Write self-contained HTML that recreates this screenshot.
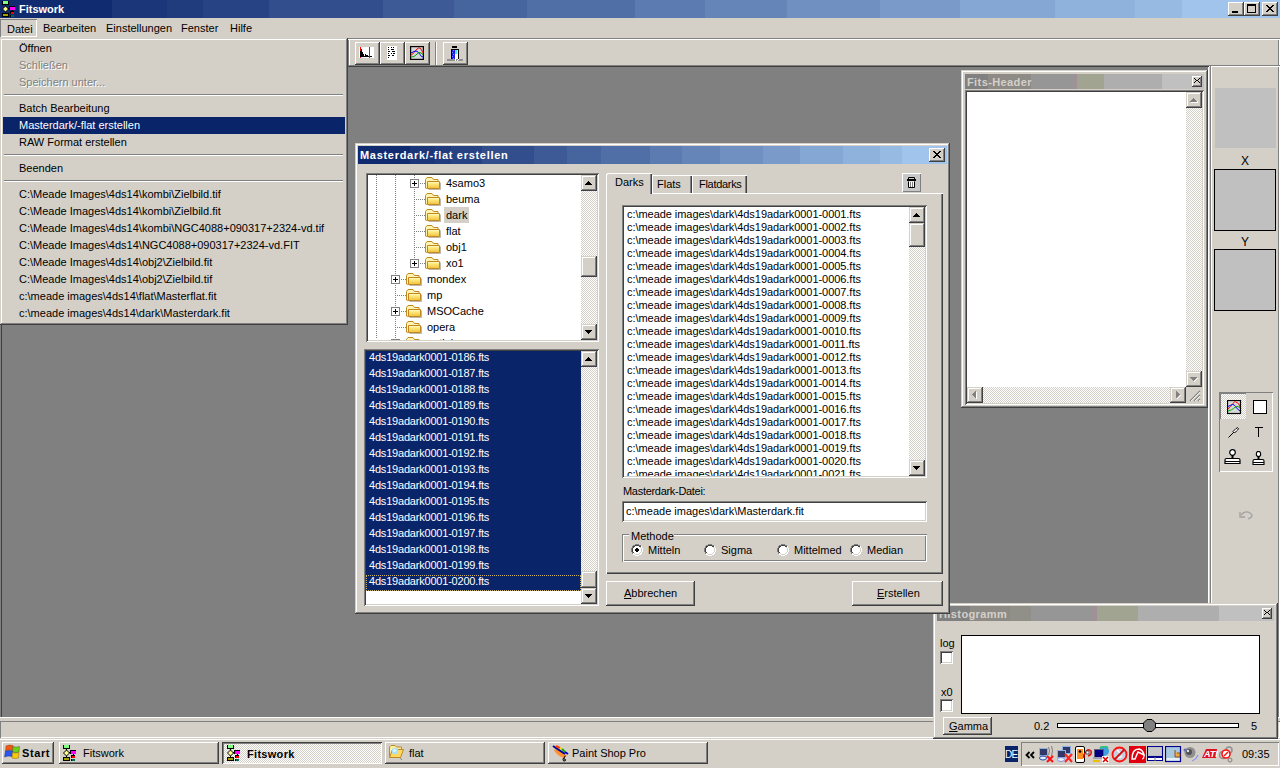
<!DOCTYPE html>
<html><head><meta charset="utf-8">
<style>
*{margin:0;padding:0;box-sizing:border-box}
html,body{width:1280px;height:768px;overflow:hidden;background:#d4d0c8;font-family:"Liberation Sans",sans-serif;font-size:11px;color:#000}
.a{position:absolute}
.t{position:absolute;white-space:nowrap;line-height:13px;font-size:11px}
.b{font-weight:bold}
</style></head><body>

<div class="a" style="left:0px;top:0px;width:1280px;height:18px;background:linear-gradient(90deg,#112b70 0px 112px,#1b3679 112px 167px,#213c7d 167px 203px,#274383 203px 269px,#324e8c 269px 383px,#3d5a96 383px 454px,#46649d 454px 527px,#516fa7 527px 635px,#5c7bb0 635px 705px,#6585b8 705px 787px,#7090c1 787px 880px,#7a9bca 880px 960px,#85a7d3 960px 1055px,#8fb2dd 1055px 1135px,#97bae3 1135px 1182px,#a0c4eb 1182px 1280px)"></div>
<div class="t" style="left:19px;top:3px;color:#fff;font-weight:bold">Fitswork</div>
<svg class="a" style="left:0px;top:0px" width="16" height="18" shape-rendering="crispEdges">
<rect x="2" y="1" width="7" height="4" fill="#000"/><rect x="3" y="1" width="5" height="3" fill="#80ff80"/>
<rect x="5" y="5" width="1" height="2" fill="#000"/>
<path d="M5.5 6L8.5 9L5.5 12L2.5 9z" fill="#ffff90" stroke="#000" stroke-width="1" shape-rendering="auto"/>
<rect x="5" y="12" width="1" height="1" fill="#000"/>
<rect x="2" y="13" width="7" height="4" fill="#000"/><rect x="3" y="14" width="5" height="2" fill="#a0a000"/>
<rect x="9" y="6" width="6" height="4" fill="#000"/><rect x="10" y="7" width="5" height="3" fill="#ff00ff"/>
<rect x="8" y="8" width="1" height="1" fill="#000"/>
<rect x="12" y="10" width="1" height="1" fill="#000"/>
<rect x="10" y="11" width="4" height="3" fill="#000"/><rect x="11" y="12" width="3" height="2" fill="#ff0000"/>
<rect x="10" y="15" width="4" height="2" fill="#000"/><rect x="11" y="15" width="3" height="2" fill="#006858"/>
</svg>
<div class="a" style="left:1228px;top:2px;width:16px;height:14px;background:#d4d0c8;box-shadow:inset -1px -1px #404040,inset 1px 1px #fff,inset -2px -2px #808080;"></div>
<div class="a" style="left:1244px;top:2px;width:16px;height:14px;background:#d4d0c8;box-shadow:inset -1px -1px #404040,inset 1px 1px #fff,inset -2px -2px #808080;"></div>
<div class="a" style="left:1262px;top:2px;width:16px;height:14px;background:#d4d0c8;box-shadow:inset -1px -1px #404040,inset 1px 1px #fff,inset -2px -2px #808080;"></div>
<svg class="a" style="left:1228px;top:2px" width="16" height="14"><rect x="4" y="9" width="6" height="2" fill="#000"/></svg>
<svg class="a" style="left:1244px;top:2px" width="16" height="14" shape-rendering="crispEdges"><path d="M3 2h9v2H3zM3 4h1v6H3zM11 4h1v6h-1zM3 10h9v1H3z" fill="#000"/></svg>
<svg class="a" style="left:1262px;top:2px" width="16" height="14" shape-rendering="crispEdges"><path d="M4 3h2v1h1v1h2V4h1V3h2v1h-1v1h-1v1H9v1h1v1h1v1h1v1h-2V9H9V8H7v1H6v1H4V9h1V8h1V7h1V6H6V5H5V4H4z" fill="#000"/></svg>
<div class="a" style="left:0px;top:18px;width:1280px;height:20px;background:#d4d0c8"></div>
<div class="a" style="left:0px;top:19px;width:37px;height:18px;background:#d4d0c8;box-shadow:inset 1px 1px #808080,inset -1px -1px #fff;"></div>
<div class="t" style="left:7px;top:23px;">Datei</div>
<div class="t" style="left:43px;top:22px;">Bearbeiten</div>
<div class="t" style="left:106px;top:22px;">Einstellungen</div>
<div class="t" style="left:181px;top:22px;">Fenster</div>
<div class="t" style="left:230px;top:22px;">Hilfe</div>
<div class="a" style="left:0px;top:38px;width:1280px;height:29px;background:#d4d0c8;box-shadow:inset 1px 1px #808080,inset -1px -1px #fff,inset 2px 2px #fff,inset -2px -2px #808080"></div>
<div class="a" style="left:0px;top:65px;width:1209px;height:653px;background:#808080;box-shadow:inset 1px 1px #808080,inset 2px 2px #404040,inset -1px -1px #fff,inset -2px -2px #808080"></div>
<div class="a" style="left:1210px;top:65px;width:70px;height:653px;background:#d4d0c8;box-shadow:inset 1px 1px #808080,inset -1px -1px #fff,inset 2px 2px #fff,inset -2px -2px #808080"></div>
<div class="a" style="left:0px;top:717px;width:1280px;height:22px;background:#d4d0c8;box-shadow:inset 0 1px #fff"></div>
<div class="a" style="left:0px;top:721px;width:1280px;height:17px;background:#d4d0c8;box-shadow:inset 1px 1px #808080,inset -1px -1px #fff;"></div>
<div class="a" style="left:0px;top:738px;width:1280px;height:30px;background:#d4d0c8;box-shadow:inset 0 1px #d4d0c8,inset 0 2px #fff"></div>
<div class="a" style="left:348px;top:40px;width:1px;height:26px;background:#808080"></div>
<div class="a" style="left:349px;top:40px;width:1px;height:25px;background:#fff"></div>
<div class="a" style="left:355px;top:42px;width:25px;height:23px;background:#d4d0c8;box-shadow:inset -1px -1px #404040,inset 1px 1px #fff,inset -2px -2px #808080;"></div>
<div class="a" style="left:380px;top:42px;width:25px;height:23px;background:#d4d0c8;box-shadow:inset -1px -1px #404040,inset 1px 1px #fff,inset -2px -2px #808080;"></div>
<div class="a" style="left:405px;top:42px;width:25px;height:23px;background:#d4d0c8;box-shadow:inset -1px -1px #404040,inset 1px 1px #fff,inset -2px -2px #808080;"></div>
<div class="a" style="left:443px;top:42px;width:25px;height:23px;background:#d4d0c8;box-shadow:inset -1px -1px #404040,inset 1px 1px #fff,inset -2px -2px #808080;"></div>
<div class="a" style="left:435px;top:42px;width:1px;height:23px;background:#808080"></div>
<div class="a" style="left:436px;top:42px;width:1px;height:23px;background:#fff"></div>
<svg class="a" style="left:359px;top:47px" width="15" height="11" shape-rendering="crispEdges">
<rect width="15" height="11" fill="#fff"/>
<rect x="1" y="0" width="1" height="11" fill="#f00"/><rect x="10" y="0" width="1" height="11" fill="#f00"/>
<path d="M1 4h1v6H1zM2 2h1v8H2zM3 5h1v5H3zM4 7h1v3H4zM5 9h1v1H5zM6 7h1v3H6zM7 8h2v2H7zM9 9h1v1H9zM11 9h2v1h-2z" fill="#000"/>
</svg>
<svg class="a" style="left:387px;top:46px" width="11" height="14">
<rect width="10" height="14" fill="#fff"/>
<g fill="#000"><rect x="1" y="1" width="1" height="1"/><rect x="4" y="1" width="1" height="1"/><rect x="6" y="1" width="1" height="1"/>
<rect x="1" y="3" width="1" height="1"/><rect x="4" y="3" width="3" height="1"/>
<rect x="1" y="5" width="2" height="1"/><rect x="5" y="5" width="3" height="1"/>
<rect x="1" y="7" width="1" height="1"/><rect x="4" y="7" width="1" height="1"/><rect x="6" y="7" width="2" height="1"/>
<rect x="1" y="9" width="2" height="1"/><rect x="5" y="9" width="2" height="1"/>
<rect x="1" y="11" width="1" height="1"/></g>
</svg>
<svg class="a" style="left:410px;top:46px" width="14" height="14">
<rect x="1" y="1" width="12" height="12" fill="#d8d8d8"/><rect x="0.6" y="0.6" width="12.8" height="12.8" fill="none" stroke="#000" stroke-width="1.2"/>
<path d="M1 9.5 L4 6.5 L7 3 L8.5 2 L10 2 L11.5 4 L13 7" stroke="#f00" fill="none"/>
<path d="M1 7 L4 5.5 L6 5 L8 6 L10 8.5 L11.5 10.5 L13 11" stroke="#00f" fill="none"/>
<path d="M1 11 L4 10.5 L6 9 L8 7 L9 6.5 L11 7 L13 8.5" stroke="#0a0" fill="none"/>
</svg>
<svg class="a" style="left:446px;top:45px" width="18" height="17" shape-rendering="crispEdges">
<rect x="6" y="1" width="5" height="2" fill="#000"/>
<rect x="5" y="4" width="8" height="11" fill="#000"/>
<rect x="6" y="5" width="3" height="9" fill="#2020e0"/>
<path d="M7 5h1v1H7zM6 7h1v1H6zM7 9h1v1H7zM6 11h1v1H6zM7 13h1v1H7z" fill="#8080ff"/>
<rect x="9" y="5" width="3" height="10" fill="#fff"/>
<rect x="9" y="5" width="2" height="4" fill="#40e8f0"/>
<rect x="1" y="14" width="16" height="2" fill="#909090"/>
<path d="M9 14h1v2H9zM11 15h1v1h-1zM12 14h1v1h-1z" fill="#fff"/>
</svg>
<div class="a" style="left:1215px;top:88px;width:61px;height:60px;background:#c0c0c0"></div>
<div class="t" style="left:1241px;top:155px;font-size:12px">X</div>
<div class="a" style="left:1214px;top:169px;width:62px;height:62px;background:#c0c0c0;border:1px solid #000"></div>
<div class="t" style="left:1241px;top:236px;font-size:12px">Y</div>
<div class="a" style="left:1214px;top:249px;width:62px;height:62px;background:#c0c0c0;border:1px solid #000"></div>
<div class="a" style="left:1219px;top:392px;width:54px;height:80px;box-shadow:inset 1px 1px #808080,inset -1px -1px #fff"></div>
<div class="a" style="left:1220px;top:393px;width:26px;height:26px;background:repeating-conic-gradient(#fff 0 25%,#d4d0c8 0 50%) 0 0/2px 2px;box-shadow:inset 1px 1px #808080"></div>
<svg class="a" style="left:1227px;top:400px" width="15" height="15">
<rect x="0.5" y="0.5" width="13" height="13" fill="#d8d8d8" stroke="#000" stroke-width="1.2"/>
<path d="M1 9 Q4 6 6 3.5 T8 1.5 T10 2.5 13 7" stroke="#f00" fill="none"/>
<path d="M1 6.5 Q4 5 5.5 4.5 T8.5 6.5 13 11" stroke="#00f" fill="none"/>
<path d="M1 11 Q5 10 6.5 8.5 T9.5 6.5 13 8" stroke="#0a0" fill="none"/>
</svg>
<div class="a" style="left:1253px;top:400px;width:14px;height:14px;background:#fff;border:1px solid #000"></div>
<svg class="a" style="left:1227px;top:426px" width="13" height="13">
<path d="M1.5 11.5L7 6" stroke="#000" stroke-width="1"/><path d="M6 5.5L9 2.5Q11 1 11.5 2.5Q11 4 9.5 5L7.5 7z" fill="#fff" stroke="#000" stroke-width="1"/>
</svg>
<svg class="a" style="left:1255px;top:427px" width="8" height="11" shape-rendering="crispEdges">
<rect x="0" y="0" width="8" height="1" fill="#000"/><rect x="3" y="0" width="1" height="10" fill="#000"/>
</svg>
<svg class="a" style="left:1224px;top:449px" width="17" height="17">
<circle cx="8.5" cy="3.5" r="2.8" fill="#fff" stroke="#000" stroke-width="1.2"/><rect x="7.5" y="6" width="2" height="3" fill="#000"/>
<path d="M2.5 9.5h12q1.5 0 1.5 1.5v3.5h-15V11q0-1.5 1.5-1.5z" fill="#fff" stroke="#000" stroke-width="1.2"/><path d="M1 12.5h15" stroke="#000"/>
</svg>
<svg class="a" style="left:1252px;top:451px" width="13" height="15">
<ellipse cx="6.5" cy="3" rx="2.2" ry="2.6" fill="#fff" stroke="#000" stroke-width="1.1"/><rect x="5.5" y="5.5" width="2" height="3" fill="#000"/>
<path d="M2.5 8.5h8q1.5 0 1.5 1.5v3.5H1V10q0-1.5 1.5-1.5z" fill="#fff" stroke="#000" stroke-width="1.1"/><path d="M1 11.5h11" stroke="#000"/>
</svg>
<svg class="a" style="left:1239px;top:509px" width="16" height="12">
<path d="M2 6 Q6 1 11 4 T9 10" stroke="#a0a0a0" fill="none" stroke-width="1.3"/><path d="M1 3v5h5" stroke="#a0a0a0" fill="none" stroke-width="1.3"/>
</svg>
<div class="a" style="left:0px;top:38px;width:348px;height:287px;background:#d4d0c8;box-shadow:inset -1px -1px #404040,inset 1px 1px #d4d0c8,inset -2px -2px #808080,inset 2px 2px #fff"></div>
<div class="t" style="left:19px;top:42px;">Öffnen</div>
<div class="t" style="left:20px;top:60px;color:#fff">Schließen</div>
<div class="t" style="left:19px;top:59px;color:#808080">Schließen</div>
<div class="t" style="left:20px;top:77px;color:#fff">Speichern unter...</div>
<div class="t" style="left:19px;top:76px;color:#808080">Speichern unter...</div>
<div class="a" style="left:4px;top:94px;width:339px;height:1px;background:#808080"></div>
<div class="a" style="left:4px;top:95px;width:339px;height:1px;background:#fff"></div>
<div class="t" style="left:19px;top:102px;">Batch Bearbeitung</div>
<div class="a" style="left:3px;top:117px;width:342px;height:17px;background:#0a246a"></div>
<div class="t" style="left:19px;top:119px;color:#fff">Masterdark/-flat erstellen</div>
<div class="t" style="left:19px;top:136px;">RAW Format erstellen</div>
<div class="a" style="left:4px;top:154px;width:339px;height:1px;background:#808080"></div>
<div class="a" style="left:4px;top:155px;width:339px;height:1px;background:#fff"></div>
<div class="t" style="left:19px;top:162px;">Beenden</div>
<div class="a" style="left:4px;top:180px;width:339px;height:1px;background:#808080"></div>
<div class="a" style="left:4px;top:181px;width:339px;height:1px;background:#fff"></div>
<div class="t" style="left:19px;top:188px;">C:\Meade Images\4ds14\kombi\Zielbild.tif</div>
<div class="t" style="left:19px;top:205px;">C:\Meade Images\4ds14\kombi\Zielbild.fit</div>
<div class="t" style="left:19px;top:222px;">C:\Meade Images\4ds14\kombi\NGC4088+090317+2324-vd.tif</div>
<div class="t" style="left:19px;top:239px;">C:\Meade Images\4ds14\NGC4088+090317+2324-vd.FIT</div>
<div class="t" style="left:19px;top:256px;">C:\Meade Images\4ds14\obj2\Zielbild.fit</div>
<div class="t" style="left:19px;top:273px;">C:\Meade Images\4ds14\obj2\Zielbild.tif</div>
<div class="t" style="left:19px;top:290px;">c:\meade images\4ds14\flat\Masterflat.fit</div>
<div class="t" style="left:19px;top:307px;">c:\meade images\4ds14\dark\Masterdark.fit</div>
<div class="a" style="left:961px;top:70px;width:247px;height:338px;background:#d4d0c8;box-shadow:inset -1px -1px #404040,inset 1px 1px #d4d0c8,inset -2px -2px #808080,inset 2px 2px #fff"></div>
<div class="a" style="left:965px;top:74px;width:239px;height:15px;background:linear-gradient(90deg,#808080 0px 23px,#8e8a86 23px 66px,#969696 66px 108px,#a09098 108px 112px,#a0a490 112px 139px,#aeaeae 139px 197px,#c0c0c0 197px 238px)"></div>
<div class="t" style="left:967px;top:76px;color:#d4d0c8;font-weight:bold;letter-spacing:0.4px">Fits-Header</div>
<div class="a" style="left:1192px;top:76px;width:10px;height:11px;background:#d4d0c8;box-shadow:inset -1px -1px #404040,inset 1px 1px #fff,inset -2px -2px #808080;"></div>
<svg class="a" style="left:1192px;top:76px" width="10" height="11" shape-rendering="crispEdges"><path d="M2 2h1v1H2zM7 2h1v1H7zM3 3h1v1H3zM6 3h1v1H6zM4 4h2v1H4zM3 5h1v1H3zM6 5h1v1H6zM2 6h1v1H2zM7 6h1v1H7z" fill="#000"/></svg>
<div class="a" style="left:965px;top:90px;width:239px;height:315px;background:#fff;box-shadow:inset 1px 1px #808080,inset -1px -1px #fff,inset 2px 2px #404040,inset -2px -2px #d4d0c8;"></div>
<div class="a" style="left:1186px;top:92px;width:16px;height:295px;background:repeating-conic-gradient(#fff 0 25%,#d4d0c8 0 50%) 0 0/2px 2px"></div>
<div class="a" style="left:1186px;top:92px;width:16px;height:16px;background:#d4d0c8;box-shadow:inset -1px -1px #404040,inset 1px 1px #d4d0c8,inset -2px -2px #808080,inset 2px 2px #fff;"></div>
<div class="a" style="left:1186px;top:371px;width:16px;height:16px;background:#d4d0c8;box-shadow:inset -1px -1px #404040,inset 1px 1px #d4d0c8,inset -2px -2px #808080,inset 2px 2px #fff;"></div>
<svg class="a" style="left:1190px;top:98px" width="8" height="6" shape-rendering="crispEdges"><path d="M3 0h1v1h1v1h1v1h1v1H0V3h1V2h1V1h1z" fill="#808080"/><path d="M1 4h7v1H1zM7 3h1v1H7z" fill="#fff"/></svg>
<svg class="a" style="left:1190px;top:377px" width="8" height="6" shape-rendering="crispEdges"><path d="M0 0h7v1h-1v1h-1v1h-1v1H3V3H2V2H1V1H0z" fill="#808080"/><path d="M4 4h1v1H4zM5 3h1v1H5zM6 2h1v1H6zM7 1h1v1H7z" fill="#fff"/></svg>
<div class="a" style="left:967px;top:387px;width:219px;height:16px;background:repeating-conic-gradient(#fff 0 25%,#d4d0c8 0 50%) 0 0/2px 2px"></div>
<div class="a" style="left:967px;top:387px;width:16px;height:16px;background:#d4d0c8;box-shadow:inset -1px -1px #404040,inset 1px 1px #d4d0c8,inset -2px -2px #808080,inset 2px 2px #fff;"></div>
<div class="a" style="left:1170px;top:387px;width:16px;height:16px;background:#d4d0c8;box-shadow:inset -1px -1px #404040,inset 1px 1px #d4d0c8,inset -2px -2px #808080,inset 2px 2px #fff;"></div>
<svg class="a" style="left:972px;top:391px" width="6" height="9" shape-rendering="crispEdges"><path d="M3 0h1v7H3zM2 1h1v5H2zM1 2h1v3H1zM0 3h1v1H0z" fill="#808080"/><path d="M4 1h1v7H4z" fill="#fff"/></svg>
<svg class="a" style="left:1176px;top:391px" width="6" height="9" shape-rendering="crispEdges"><path d="M0 0h1v7H0zM1 1h1v5H1zM2 2h1v3H2zM3 3h1v1H3z" fill="#808080"/><path d="M1 7h1v1H1zM2 6h1v1H2zM3 5h1v1H3zM4 4h1v1H4z" fill="#fff"/></svg>
<div class="a" style="left:1186px;top:387px;width:16px;height:16px;background:#d4d0c8"></div>
<svg class="a" style="left:1189px;top:390px" width="12" height="12"><path d="M11 1L1 11M11 5L5 11M11 9L9 11" stroke="#808080" stroke-width="1.2"/><path d="M11 2L2 11M11 6L6 11M11 10L10 11" stroke="#fff" stroke-width="0.8"/></svg>
<div class="a" style="left:933px;top:603px;width:345px;height:136px;background:#d4d0c8;box-shadow:inset -1px -1px #404040,inset 1px 1px #d4d0c8,inset -2px -2px #808080,inset 2px 2px #fff"></div>
<div class="a" style="left:937px;top:606px;width:337px;height:15px;background:linear-gradient(90deg,#808080 0px 33px,#8e8a86 33px 73px,#909088 73px 94px,#969696 94px 154px,#a09098 154px 160px,#a0a490 160px 201px,#aeaeae 201px 282px,#c0c0c0 282px 337px)"></div>
<div class="t" style="left:939px;top:608px;color:#d4d0c8;font-weight:bold;letter-spacing:0.4px">Histogramm</div>
<div class="a" style="left:1262px;top:608px;width:10px;height:11px;background:#d4d0c8;box-shadow:inset -1px -1px #404040,inset 1px 1px #fff,inset -2px -2px #808080;"></div>
<svg class="a" style="left:1262px;top:608px" width="10" height="11" shape-rendering="crispEdges"><path d="M2 2h1v1H2zM7 2h1v1H7zM3 3h1v1H3zM6 3h1v1H6zM4 4h2v1H4zM3 5h1v1H3zM6 5h1v1H6zM2 6h1v1H2zM7 6h1v1H7z" fill="#000"/></svg>
<div class="a" style="left:961px;top:635px;width:299px;height:79px;background:#fff;border:1px solid #000"></div>
<div class="t" style="left:940px;top:637px;">log</div>
<div class="a" style="left:940px;top:651px;width:13px;height:13px;background:#fff;box-shadow:inset 1px 1px #808080,inset -1px -1px #fff,inset 2px 2px #404040,inset -2px -2px #d4d0c8;"></div>
<div class="t" style="left:941px;top:686px;">x0</div>
<div class="a" style="left:940px;top:699px;width:13px;height:13px;background:#fff;box-shadow:inset 1px 1px #808080,inset -1px -1px #fff,inset 2px 2px #404040,inset -2px -2px #d4d0c8;"></div>
<div class="a" style="left:943px;top:717px;width:49px;height:18px;background:#d4d0c8;box-shadow:inset -1px -1px #404040,inset 1px 1px #fff,inset -2px -2px #808080;"></div>
<div class="t" style="left:949px;top:720px;"><u>G</u>amma</div>
<div class="t" style="left:1034px;top:720px;">0.2</div>
<div class="t" style="left:1251px;top:720px;">5</div>
<div class="a" style="left:1057px;top:723px;width:182px;height:5px;background:#fff;border:1px solid #000"></div>
<svg class="a" style="left:1143px;top:719px" width="13" height="13"><path d="M4 .5h5L12.5 4v5L9 12.5H4L.5 9V4z" fill="#808080" stroke="#000"/></svg>
<div class="a" style="left:355px;top:143px;width:595px;height:471px;background:#d4d0c8;box-shadow:inset -1px -1px #404040,inset 1px 1px #d4d0c8,inset -2px -2px #808080,inset 2px 2px #fff"></div>
<div class="a" style="left:358px;top:146px;width:589px;height:18px;background:linear-gradient(90deg,#112b70 0px 52px,#1b3679 52px 77px,#213c7d 77px 93px,#274383 93px 124px,#324e8c 124px 176px,#3d5a96 176px 209px,#46649d 209px 243px,#516fa7 243px 292px,#5c7bb0 292px 324px,#6585b8 324px 362px,#7090c1 362px 405px,#7a9bca 405px 442px,#85a7d3 442px 485px,#8fb2dd 485px 522px,#97bae3 522px 544px,#a0c4eb 544px 589px)"></div>
<div class="t" style="left:360px;top:149px;color:#fff;font-weight:bold;letter-spacing:0.7px">Masterdark/-flat erstellen</div>
<div class="a" style="left:929px;top:148px;width:16px;height:14px;background:#d4d0c8;box-shadow:inset -1px -1px #404040,inset 1px 1px #fff,inset -2px -2px #808080;"></div>
<svg class="a" style="left:929px;top:148px" width="16" height="14" shape-rendering="crispEdges"><path d="M4 3h2v1h1v1h2V4h1V3h2v1h-1v1h-1v1H9v1h1v1h1v1h1v1h-2V9H9V8H7v1H6v1H4V9h1V8h1V7h1V6H6V5H5V4H4z" fill="#000"/></svg>
<div class="a" style="left:366px;top:173px;width:233px;height:169px;background:#fff;box-shadow:inset 1px 1px #808080,inset -1px -1px #fff,inset 2px 2px #404040,inset -2px -2px #d4d0c8;"></div>
<div class="a" style="left:581px;top:175px;width:16px;height:165px;background:repeating-conic-gradient(#fff 0 25%,#d4d0c8 0 50%) 0 0/2px 2px"></div>
<div class="a" style="left:581px;top:175px;width:16px;height:16px;background:#d4d0c8;box-shadow:inset -1px -1px #404040,inset 1px 1px #d4d0c8,inset -2px -2px #808080,inset 2px 2px #fff;"></div>
<div class="a" style="left:581px;top:324px;width:16px;height:16px;background:#d4d0c8;box-shadow:inset -1px -1px #404040,inset 1px 1px #d4d0c8,inset -2px -2px #808080,inset 2px 2px #fff;"></div>
<svg class="a" style="left:585px;top:181px" width="7" height="4"><path d="M3 0h1v1h1v1h1v1h1v1H0V3h1V2h1V1h1z" fill="#000"/></svg>
<svg class="a" style="left:585px;top:330px" width="7" height="4"><path d="M0 0h7v1h-1v1h-1v1h-1v1H3V3H2V2H1V1H0z" fill="#000"/></svg>
<div class="a" style="left:581px;top:256px;width:16px;height:21px;background:#d4d0c8;box-shadow:inset -1px -1px #404040,inset 1px 1px #d4d0c8,inset -2px -2px #808080,inset 2px 2px #fff;"></div>
<div class="a" style="left:368px;top:175px;width:213px;height:165px;overflow:hidden"><div class="a" style="left:-368px;top:-175px;width:1280px;height:768px">
<div class="a" style="left:376px;top:175px;width:1px;height:164px;background:repeating-linear-gradient(180deg,#808080 0 1px,transparent 1px 2px)"></div>
<div class="a" style="left:395px;top:175px;width:1px;height:164px;background:repeating-linear-gradient(180deg,#808080 0 1px,transparent 1px 2px)"></div>
<div class="a" style="left:414px;top:175px;width:1px;height:88px;background:repeating-linear-gradient(180deg,#808080 0 1px,transparent 1px 2px)"></div>
<svg width="0" height="0" style="position:absolute"><defs><linearGradient id="fg" x1="0" y1="0" x2="0" y2="1"><stop offset="0" stop-color="#fffbd8"/><stop offset=".35" stop-color="#ffe878"/><stop offset="1" stop-color="#f0c040"/></linearGradient></defs></svg>
<div class="a" style="left:416px;top:183px;width:9px;height:1px;background:repeating-linear-gradient(90deg,#808080 0 1px,transparent 1px 2px)"></div>
<div class="a" style="left:410px;top:179px;width:9px;height:9px;background:#fff;border:1px solid #808080"></div>
<div class="a" style="left:412px;top:183px;width:5px;height:1px;background:#000"></div>
<div class="a" style="left:414px;top:181px;width:1px;height:5px;background:#000"></div>
<svg class="a" style="left:425px;top:177px" width="17" height="15"><path d="M15.5 5.5v7h-12" stroke="#706040" fill="none" opacity=".45"/><path d="M.5 11V2.5l1.5-2h5l1.5 2h4.5v2" fill="#fff4b0" stroke="#c08820"/><path d="M2.5 11.5v-7h12v7z" fill="url(#fg)" stroke="#c08820"/><path d="M.5 11l2 .5" stroke="#c08820"/></svg>
<div class="t" style="left:446px;top:177px;">4samo3</div>
<div class="a" style="left:416px;top:199px;width:9px;height:1px;background:repeating-linear-gradient(90deg,#808080 0 1px,transparent 1px 2px)"></div>
<svg class="a" style="left:425px;top:193px" width="17" height="15"><path d="M15.5 5.5v7h-12" stroke="#706040" fill="none" opacity=".45"/><path d="M.5 11V2.5l1.5-2h5l1.5 2h4.5v2" fill="#fff4b0" stroke="#c08820"/><path d="M2.5 11.5v-7h12v7z" fill="url(#fg)" stroke="#c08820"/><path d="M.5 11l2 .5" stroke="#c08820"/></svg>
<div class="t" style="left:446px;top:193px;">beuma</div>
<div class="a" style="left:416px;top:215px;width:9px;height:1px;background:repeating-linear-gradient(90deg,#808080 0 1px,transparent 1px 2px)"></div>
<svg class="a" style="left:425px;top:209px" width="17" height="15"><path d="M15.5 5.5v7h-12" stroke="#706040" fill="none" opacity=".45"/><path d="M.5 11V2.5l1.5-2h5l1.5 2h4.5v2" fill="#fff4b0" stroke="#c08820"/><path d="M2.5 11.5v-7h12v7z" fill="url(#fg)" stroke="#c08820"/><path d="M.5 11l2 .5" stroke="#c08820"/></svg>
<div class="a" style="left:444px;top:207px;width:25px;height:16px;background:#d4d0c8"></div>
<div class="t" style="left:446px;top:209px;">dark</div>
<div class="a" style="left:416px;top:231px;width:9px;height:1px;background:repeating-linear-gradient(90deg,#808080 0 1px,transparent 1px 2px)"></div>
<svg class="a" style="left:425px;top:225px" width="17" height="15"><path d="M15.5 5.5v7h-12" stroke="#706040" fill="none" opacity=".45"/><path d="M.5 11V2.5l1.5-2h5l1.5 2h4.5v2" fill="#fff4b0" stroke="#c08820"/><path d="M2.5 11.5v-7h12v7z" fill="url(#fg)" stroke="#c08820"/><path d="M.5 11l2 .5" stroke="#c08820"/></svg>
<div class="t" style="left:446px;top:225px;">flat</div>
<div class="a" style="left:416px;top:247px;width:9px;height:1px;background:repeating-linear-gradient(90deg,#808080 0 1px,transparent 1px 2px)"></div>
<svg class="a" style="left:425px;top:241px" width="17" height="15"><path d="M15.5 5.5v7h-12" stroke="#706040" fill="none" opacity=".45"/><path d="M.5 11V2.5l1.5-2h5l1.5 2h4.5v2" fill="#fff4b0" stroke="#c08820"/><path d="M2.5 11.5v-7h12v7z" fill="url(#fg)" stroke="#c08820"/><path d="M.5 11l2 .5" stroke="#c08820"/></svg>
<div class="t" style="left:446px;top:241px;">obj1</div>
<div class="a" style="left:416px;top:263px;width:9px;height:1px;background:repeating-linear-gradient(90deg,#808080 0 1px,transparent 1px 2px)"></div>
<div class="a" style="left:410px;top:259px;width:9px;height:9px;background:#fff;border:1px solid #808080"></div>
<div class="a" style="left:412px;top:263px;width:5px;height:1px;background:#000"></div>
<div class="a" style="left:414px;top:261px;width:1px;height:5px;background:#000"></div>
<svg class="a" style="left:425px;top:257px" width="17" height="15"><path d="M15.5 5.5v7h-12" stroke="#706040" fill="none" opacity=".45"/><path d="M.5 11V2.5l1.5-2h5l1.5 2h4.5v2" fill="#fff4b0" stroke="#c08820"/><path d="M2.5 11.5v-7h12v7z" fill="url(#fg)" stroke="#c08820"/><path d="M.5 11l2 .5" stroke="#c08820"/></svg>
<div class="t" style="left:446px;top:257px;">xo1</div>
<div class="a" style="left:397px;top:279px;width:9px;height:1px;background:repeating-linear-gradient(90deg,#808080 0 1px,transparent 1px 2px)"></div>
<div class="a" style="left:391px;top:275px;width:9px;height:9px;background:#fff;border:1px solid #808080"></div>
<div class="a" style="left:393px;top:279px;width:5px;height:1px;background:#000"></div>
<div class="a" style="left:395px;top:277px;width:1px;height:5px;background:#000"></div>
<svg class="a" style="left:406px;top:273px" width="17" height="15"><path d="M15.5 5.5v7h-12" stroke="#706040" fill="none" opacity=".45"/><path d="M.5 11V2.5l1.5-2h5l1.5 2h4.5v2" fill="#fff4b0" stroke="#c08820"/><path d="M2.5 11.5v-7h12v7z" fill="url(#fg)" stroke="#c08820"/><path d="M.5 11l2 .5" stroke="#c08820"/></svg>
<div class="t" style="left:427px;top:273px;">mondex</div>
<div class="a" style="left:397px;top:295px;width:9px;height:1px;background:repeating-linear-gradient(90deg,#808080 0 1px,transparent 1px 2px)"></div>
<svg class="a" style="left:406px;top:289px" width="17" height="15"><path d="M15.5 5.5v7h-12" stroke="#706040" fill="none" opacity=".45"/><path d="M.5 11V2.5l1.5-2h5l1.5 2h4.5v2" fill="#fff4b0" stroke="#c08820"/><path d="M2.5 11.5v-7h12v7z" fill="url(#fg)" stroke="#c08820"/><path d="M.5 11l2 .5" stroke="#c08820"/></svg>
<div class="t" style="left:427px;top:289px;">mp</div>
<div class="a" style="left:397px;top:311px;width:9px;height:1px;background:repeating-linear-gradient(90deg,#808080 0 1px,transparent 1px 2px)"></div>
<div class="a" style="left:391px;top:307px;width:9px;height:9px;background:#fff;border:1px solid #808080"></div>
<div class="a" style="left:393px;top:311px;width:5px;height:1px;background:#000"></div>
<div class="a" style="left:395px;top:309px;width:1px;height:5px;background:#000"></div>
<svg class="a" style="left:406px;top:305px" width="17" height="15"><path d="M15.5 5.5v7h-12" stroke="#706040" fill="none" opacity=".45"/><path d="M.5 11V2.5l1.5-2h5l1.5 2h4.5v2" fill="#fff4b0" stroke="#c08820"/><path d="M2.5 11.5v-7h12v7z" fill="url(#fg)" stroke="#c08820"/><path d="M.5 11l2 .5" stroke="#c08820"/></svg>
<div class="t" style="left:427px;top:305px;">MSOCache</div>
<div class="a" style="left:397px;top:327px;width:9px;height:1px;background:repeating-linear-gradient(90deg,#808080 0 1px,transparent 1px 2px)"></div>
<svg class="a" style="left:406px;top:321px" width="17" height="15"><path d="M15.5 5.5v7h-12" stroke="#706040" fill="none" opacity=".45"/><path d="M.5 11V2.5l1.5-2h5l1.5 2h4.5v2" fill="#fff4b0" stroke="#c08820"/><path d="M2.5 11.5v-7h12v7z" fill="url(#fg)" stroke="#c08820"/><path d="M.5 11l2 .5" stroke="#c08820"/></svg>
<div class="t" style="left:427px;top:321px;">opera</div>
<div class="a" style="left:397px;top:343px;width:9px;height:1px;background:repeating-linear-gradient(90deg,#808080 0 1px,transparent 1px 2px)"></div>
<div class="a" style="left:391px;top:339px;width:9px;height:9px;background:#fff;border:1px solid #808080"></div>
<div class="a" style="left:393px;top:343px;width:5px;height:1px;background:#000"></div>
<div class="a" style="left:395px;top:341px;width:1px;height:5px;background:#000"></div>
<svg class="a" style="left:406px;top:337px" width="17" height="15"><path d="M15.5 5.5v7h-12" stroke="#706040" fill="none" opacity=".45"/><path d="M.5 11V2.5l1.5-2h5l1.5 2h4.5v2" fill="#fff4b0" stroke="#c08820"/><path d="M2.5 11.5v-7h12v7z" fill="url(#fg)" stroke="#c08820"/><path d="M.5 11l2 .5" stroke="#c08820"/></svg>
<div class="t" style="left:427px;top:337px;">optiui</div>
</div></div>
<div class="a" style="left:364px;top:349px;width:235px;height:257px;background:#fff;box-shadow:inset 1px 1px #808080,inset -1px -1px #fff,inset 2px 2px #404040,inset -2px -2px #d4d0c8;"></div>
<div class="a" style="left:366px;top:351px;width:215px;height:253px;overflow:hidden"><div class="a" style="left:-366px;top:-351px;width:1280px;height:768px">
<div class="a" style="left:366px;top:351px;width:215px;height:240px;background:#0a246a"></div>
<div class="t" style="left:369px;top:351px;color:#fff;letter-spacing:-0.2px">4ds19adark0001-0186.fts</div>
<div class="t" style="left:369px;top:367px;color:#fff;letter-spacing:-0.2px">4ds19adark0001-0187.fts</div>
<div class="t" style="left:369px;top:383px;color:#fff;letter-spacing:-0.2px">4ds19adark0001-0188.fts</div>
<div class="t" style="left:369px;top:399px;color:#fff;letter-spacing:-0.2px">4ds19adark0001-0189.fts</div>
<div class="t" style="left:369px;top:415px;color:#fff;letter-spacing:-0.2px">4ds19adark0001-0190.fts</div>
<div class="t" style="left:369px;top:431px;color:#fff;letter-spacing:-0.2px">4ds19adark0001-0191.fts</div>
<div class="t" style="left:369px;top:447px;color:#fff;letter-spacing:-0.2px">4ds19adark0001-0192.fts</div>
<div class="t" style="left:369px;top:463px;color:#fff;letter-spacing:-0.2px">4ds19adark0001-0193.fts</div>
<div class="t" style="left:369px;top:479px;color:#fff;letter-spacing:-0.2px">4ds19adark0001-0194.fts</div>
<div class="t" style="left:369px;top:495px;color:#fff;letter-spacing:-0.2px">4ds19adark0001-0195.fts</div>
<div class="t" style="left:369px;top:511px;color:#fff;letter-spacing:-0.2px">4ds19adark0001-0196.fts</div>
<div class="t" style="left:369px;top:527px;color:#fff;letter-spacing:-0.2px">4ds19adark0001-0197.fts</div>
<div class="t" style="left:369px;top:543px;color:#fff;letter-spacing:-0.2px">4ds19adark0001-0198.fts</div>
<div class="t" style="left:369px;top:559px;color:#fff;letter-spacing:-0.2px">4ds19adark0001-0199.fts</div>
<div class="t" style="left:369px;top:575px;color:#fff;letter-spacing:-0.2px">4ds19adark0001-0200.fts</div>
<div class="a" style="left:366px;top:575px;width:215px;height:16px;border:1px dotted #c8b060"></div>
</div></div>
<div class="a" style="left:581px;top:351px;width:16px;height:253px;background:repeating-conic-gradient(#fff 0 25%,#d4d0c8 0 50%) 0 0/2px 2px"></div>
<div class="a" style="left:581px;top:351px;width:16px;height:16px;background:#d4d0c8;box-shadow:inset -1px -1px #404040,inset 1px 1px #d4d0c8,inset -2px -2px #808080,inset 2px 2px #fff;"></div>
<div class="a" style="left:581px;top:588px;width:16px;height:16px;background:#d4d0c8;box-shadow:inset -1px -1px #404040,inset 1px 1px #d4d0c8,inset -2px -2px #808080,inset 2px 2px #fff;"></div>
<svg class="a" style="left:585px;top:357px" width="7" height="4"><path d="M3 0h1v1h1v1h1v1h1v1H0V3h1V2h1V1h1z" fill="#000"/></svg>
<svg class="a" style="left:585px;top:594px" width="7" height="4"><path d="M0 0h7v1h-1v1h-1v1h-1v1H3V3H2V2H1V1H0z" fill="#000"/></svg>
<div class="a" style="left:581px;top:571px;width:16px;height:17px;background:#d4d0c8;box-shadow:inset -1px -1px #404040,inset 1px 1px #d4d0c8,inset -2px -2px #808080,inset 2px 2px #fff;"></div>
<div class="a" style="left:606px;top:193px;width:337px;height:381px;background:#d4d0c8;box-shadow:inset 1px 1px #fff,inset -1px -1px #404040,inset -2px -2px #808080"></div>
<div class="a" style="left:652px;top:175px;width:40px;height:18px;background:#d4d0c8;box-shadow:inset 1px 1px #fff,inset -1px 0 #404040,inset -2px 0 #808080"></div>
<div class="t" style="left:657px;top:178px;letter-spacing:0">Flats</div>
<div class="a" style="left:692px;top:175px;width:55px;height:18px;background:#d4d0c8;box-shadow:inset 1px 1px #fff,inset -1px 0 #404040,inset -2px 0 #808080"></div>
<div class="t" style="left:699px;top:178px;letter-spacing:-0.3px">Flatdarks</div>
<div class="a" style="left:606px;top:173px;width:46px;height:21px;background:#d4d0c8;box-shadow:inset 1px 1px #fff,inset -1px 0 #404040,inset -2px 0 #808080;border-top-left-radius:2px"></div>
<div class="t" style="left:615px;top:176px;">Darks</div>
<div class="a" style="left:902px;top:173px;width:19px;height:19px;background:#c8c8c8;box-shadow:inset 1px 1px #fff,inset -1px -1px #808080"></div>
<svg class="a" style="left:906px;top:176px" width="11" height="13">
<path d="M2.5 1.5h6v2h-6z" fill="none" stroke="#000"/><rect x="1" y="3" width="9" height="2" fill="#000"/>
<path d="M2.5 5.5v6h6v-6" fill="#fff" stroke="#000"/><path d="M4.5 6v5M6.5 6v5" stroke="#808080"/>
</svg>
<div class="a" style="left:622px;top:205px;width:305px;height:273px;background:#fff;box-shadow:inset 1px 1px #808080,inset -1px -1px #fff,inset 2px 2px #404040,inset -2px -2px #d4d0c8;"></div>
<div class="a" style="left:624px;top:207px;width:285px;height:269px;overflow:hidden"><div class="a" style="left:-624px;top:-207px;width:1280px;height:768px">
<div class="t" style="left:627px;top:208px;letter-spacing:-0.05px">c:\meade images\dark\4ds19adark0001-0001.fts</div>
<div class="t" style="left:627px;top:221px;letter-spacing:-0.05px">c:\meade images\dark\4ds19adark0001-0002.fts</div>
<div class="t" style="left:627px;top:234px;letter-spacing:-0.05px">c:\meade images\dark\4ds19adark0001-0003.fts</div>
<div class="t" style="left:627px;top:247px;letter-spacing:-0.05px">c:\meade images\dark\4ds19adark0001-0004.fts</div>
<div class="t" style="left:627px;top:260px;letter-spacing:-0.05px">c:\meade images\dark\4ds19adark0001-0005.fts</div>
<div class="t" style="left:627px;top:273px;letter-spacing:-0.05px">c:\meade images\dark\4ds19adark0001-0006.fts</div>
<div class="t" style="left:627px;top:286px;letter-spacing:-0.05px">c:\meade images\dark\4ds19adark0001-0007.fts</div>
<div class="t" style="left:627px;top:299px;letter-spacing:-0.05px">c:\meade images\dark\4ds19adark0001-0008.fts</div>
<div class="t" style="left:627px;top:312px;letter-spacing:-0.05px">c:\meade images\dark\4ds19adark0001-0009.fts</div>
<div class="t" style="left:627px;top:325px;letter-spacing:-0.05px">c:\meade images\dark\4ds19adark0001-0010.fts</div>
<div class="t" style="left:627px;top:338px;letter-spacing:-0.05px">c:\meade images\dark\4ds19adark0001-0011.fts</div>
<div class="t" style="left:627px;top:351px;letter-spacing:-0.05px">c:\meade images\dark\4ds19adark0001-0012.fts</div>
<div class="t" style="left:627px;top:364px;letter-spacing:-0.05px">c:\meade images\dark\4ds19adark0001-0013.fts</div>
<div class="t" style="left:627px;top:377px;letter-spacing:-0.05px">c:\meade images\dark\4ds19adark0001-0014.fts</div>
<div class="t" style="left:627px;top:390px;letter-spacing:-0.05px">c:\meade images\dark\4ds19adark0001-0015.fts</div>
<div class="t" style="left:627px;top:403px;letter-spacing:-0.05px">c:\meade images\dark\4ds19adark0001-0016.fts</div>
<div class="t" style="left:627px;top:416px;letter-spacing:-0.05px">c:\meade images\dark\4ds19adark0001-0017.fts</div>
<div class="t" style="left:627px;top:429px;letter-spacing:-0.05px">c:\meade images\dark\4ds19adark0001-0018.fts</div>
<div class="t" style="left:627px;top:442px;letter-spacing:-0.05px">c:\meade images\dark\4ds19adark0001-0019.fts</div>
<div class="t" style="left:627px;top:455px;letter-spacing:-0.05px">c:\meade images\dark\4ds19adark0001-0020.fts</div>
<div class="t" style="left:627px;top:468px;letter-spacing:-0.05px">c:\meade images\dark\4ds19adark0001-0021.fts</div>
</div></div>
<div class="a" style="left:909px;top:207px;width:16px;height:269px;background:repeating-conic-gradient(#fff 0 25%,#d4d0c8 0 50%) 0 0/2px 2px"></div>
<div class="a" style="left:909px;top:207px;width:16px;height:16px;background:#d4d0c8;box-shadow:inset -1px -1px #404040,inset 1px 1px #d4d0c8,inset -2px -2px #808080,inset 2px 2px #fff;"></div>
<div class="a" style="left:909px;top:460px;width:16px;height:16px;background:#d4d0c8;box-shadow:inset -1px -1px #404040,inset 1px 1px #d4d0c8,inset -2px -2px #808080,inset 2px 2px #fff;"></div>
<svg class="a" style="left:913px;top:213px" width="7" height="4"><path d="M3 0h1v1h1v1h1v1h1v1H0V3h1V2h1V1h1z" fill="#000"/></svg>
<svg class="a" style="left:913px;top:466px" width="7" height="4"><path d="M0 0h7v1h-1v1h-1v1h-1v1H3V3H2V2H1V1H0z" fill="#000"/></svg>
<div class="a" style="left:909px;top:223px;width:16px;height:24px;background:#d4d0c8;box-shadow:inset -1px -1px #404040,inset 1px 1px #d4d0c8,inset -2px -2px #808080,inset 2px 2px #fff;"></div>
<div class="t" style="left:623px;top:485px;letter-spacing:-0.3px">Masterdark-Datei:</div>
<div class="a" style="left:622px;top:501px;width:305px;height:21px;background:#fff;box-shadow:inset 1px 1px #808080,inset -1px -1px #fff,inset 2px 2px #404040,inset -2px -2px #d4d0c8;"></div>
<div class="t" style="left:626px;top:505px;">c:\meade images\dark\Masterdark.fit</div>
<div class="a" style="left:622px;top:534px;width:305px;height:28px;box-shadow:inset 1px 1px #808080,inset -1px -1px #fff,inset 2px 2px #fff,inset -2px -2px #808080"></div>
<div class="a" style="left:629px;top:529px;width:45px;height:12px;background:#d4d0c8"></div>
<div class="t" style="left:631px;top:530px;">Methode</div>
<svg class="a" style="left:631px;top:544px" width="12" height="12">
<path d="M4 0h4v1h2v1h1v2h1v4h-1v2h-1v1h-2v1H4v-1H2v-1H1V8H0V4h1V2h1V1h2z" fill="#fff"/>
<path d="M4 0h4v1H4zM2 1h2v1H2zM8 1h2v1H8zM1 2h1v2H1zM0 4h1v4H0zM1 8h1v2H1z" fill="#808080"/>
<path d="M4 1h4v1H4zM2 2h2v1H2zM8 2h2v1H8zM2 3h1v1H2zM1 4h1v4H1zM2 8h1v1H2z" fill="#404040"/>
<path d="M10 2h1v2h-1zM11 4h1v4h-1zM10 8h1v2h-1zM8 10h2v1H8zM4 11h4v1H4zM2 10h2v1H2z" fill="#fff"/>
<path d="M9 3h1v1H9zM10 4h1v4h-1zM9 8h1v1H9zM8 9h1v1H8zM4 10h4v1H4zM3 9h1v1H3z" fill="#d4d0c8"/>
<path d="M5 4h2v1h1v2h-1v1H5V7H4V5h1z" fill="#000"/>
</svg>
<div class="t" style="left:648px;top:544px;">Mitteln</div>
<svg class="a" style="left:704px;top:544px" width="12" height="12">
<path d="M4 0h4v1h2v1h1v2h1v4h-1v2h-1v1h-2v1H4v-1H2v-1H1V8H0V4h1V2h1V1h2z" fill="#fff"/>
<path d="M4 0h4v1H4zM2 1h2v1H2zM8 1h2v1H8zM1 2h1v2H1zM0 4h1v4H0zM1 8h1v2H1z" fill="#808080"/>
<path d="M4 1h4v1H4zM2 2h2v1H2zM8 2h2v1H8zM2 3h1v1H2zM1 4h1v4H1zM2 8h1v1H2z" fill="#404040"/>
<path d="M10 2h1v2h-1zM11 4h1v4h-1zM10 8h1v2h-1zM8 10h2v1H8zM4 11h4v1H4zM2 10h2v1H2z" fill="#fff"/>
<path d="M9 3h1v1H9zM10 4h1v4h-1zM9 8h1v1H9zM8 9h1v1H8zM4 10h4v1H4zM3 9h1v1H3z" fill="#d4d0c8"/>

</svg>
<div class="t" style="left:721px;top:544px;">Sigma</div>
<svg class="a" style="left:777px;top:544px" width="12" height="12">
<path d="M4 0h4v1h2v1h1v2h1v4h-1v2h-1v1h-2v1H4v-1H2v-1H1V8H0V4h1V2h1V1h2z" fill="#fff"/>
<path d="M4 0h4v1H4zM2 1h2v1H2zM8 1h2v1H8zM1 2h1v2H1zM0 4h1v4H0zM1 8h1v2H1z" fill="#808080"/>
<path d="M4 1h4v1H4zM2 2h2v1H2zM8 2h2v1H8zM2 3h1v1H2zM1 4h1v4H1zM2 8h1v1H2z" fill="#404040"/>
<path d="M10 2h1v2h-1zM11 4h1v4h-1zM10 8h1v2h-1zM8 10h2v1H8zM4 11h4v1H4zM2 10h2v1H2z" fill="#fff"/>
<path d="M9 3h1v1H9zM10 4h1v4h-1zM9 8h1v1H9zM8 9h1v1H8zM4 10h4v1H4zM3 9h1v1H3z" fill="#d4d0c8"/>

</svg>
<div class="t" style="left:794px;top:544px;">Mittelmed</div>
<svg class="a" style="left:850px;top:544px" width="12" height="12">
<path d="M4 0h4v1h2v1h1v2h1v4h-1v2h-1v1h-2v1H4v-1H2v-1H1V8H0V4h1V2h1V1h2z" fill="#fff"/>
<path d="M4 0h4v1H4zM2 1h2v1H2zM8 1h2v1H8zM1 2h1v2H1zM0 4h1v4H0zM1 8h1v2H1z" fill="#808080"/>
<path d="M4 1h4v1H4zM2 2h2v1H2zM8 2h2v1H8zM2 3h1v1H2zM1 4h1v4H1zM2 8h1v1H2z" fill="#404040"/>
<path d="M10 2h1v2h-1zM11 4h1v4h-1zM10 8h1v2h-1zM8 10h2v1H8zM4 11h4v1H4zM2 10h2v1H2z" fill="#fff"/>
<path d="M9 3h1v1H9zM10 4h1v4h-1zM9 8h1v1H9zM8 9h1v1H8zM4 10h4v1H4zM3 9h1v1H3z" fill="#d4d0c8"/>

</svg>
<div class="t" style="left:867px;top:544px;">Median</div>
<div class="a" style="left:606px;top:581px;width:89px;height:25px;background:#d4d0c8;box-shadow:inset -1px -1px #404040,inset 1px 1px #fff,inset -2px -2px #808080;"></div>
<div class="t" style="left:624px;top:587px;"><u>A</u>bbrechen</div>
<div class="a" style="left:852px;top:581px;width:91px;height:25px;background:#d4d0c8;box-shadow:inset -1px -1px #404040,inset 1px 1px #fff,inset -2px -2px #808080;"></div>
<div class="t" style="left:877px;top:587px;"><u>E</u>rstellen</div>
<div class="a" style="left:2px;top:742px;width:52px;height:22px;background:#d4d0c8;box-shadow:inset -1px -1px #404040,inset 1px 1px #fff,inset -2px -2px #808080;"></div>
<svg class="a" style="left:4px;top:744px" width="16" height="16">
<path d="M2 2Q5 0.5 9 1.5L8.5 6.5Q5 5.5 1.5 7z" fill="#f05a10" stroke="#803010" stroke-width="0.4"/>
<path d="M9 2.5Q12 3.5 15.5 2.5L15 8Q12 9 8.5 8z" fill="#70d018" stroke="#305010" stroke-width="0.4"/>
<path d="M1.5 7Q5 6 8.5 7L8 12.5Q4.5 11.5 0.5 13z" fill="#2858f0" stroke="#102070" stroke-width="0.4"/>
<path d="M8.5 8.5Q11.5 9.5 15 8.5L14.5 14Q11.5 15 8 14z" fill="#f8c808" stroke="#705010" stroke-width="0.4"/>
</svg>
<div class="t" style="left:22px;top:747px;font-weight:bold;letter-spacing:0.6px">Start</div>
<div class="a" style="left:59px;top:742px;width:160px;height:22px;background:#d4d0c8;box-shadow:inset -1px -1px #404040,inset 1px 1px #fff,inset -2px -2px #808080;"></div>
<svg class="a" style="left:61px;top:744px" width="16" height="18" shape-rendering="crispEdges">
<rect x="2" y="1" width="7" height="4" fill="#000"/><rect x="3" y="1" width="5" height="3" fill="#80ff80"/>
<rect x="5" y="5" width="1" height="2" fill="#000"/>
<path d="M5.5 6L8.5 9L5.5 12L2.5 9z" fill="#ffff90" stroke="#000" stroke-width="1" shape-rendering="auto"/>
<rect x="5" y="12" width="1" height="1" fill="#000"/>
<rect x="2" y="13" width="7" height="4" fill="#000"/><rect x="3" y="14" width="5" height="2" fill="#a0a000"/>
<rect x="9" y="6" width="6" height="4" fill="#000"/><rect x="10" y="7" width="5" height="3" fill="#ff00ff"/>
<rect x="8" y="8" width="1" height="1" fill="#000"/>
<rect x="12" y="10" width="1" height="1" fill="#000"/>
<rect x="10" y="11" width="4" height="3" fill="#000"/><rect x="11" y="12" width="3" height="2" fill="#ff0000"/>
<rect x="10" y="15" width="4" height="2" fill="#000"/><rect x="11" y="15" width="3" height="2" fill="#006858"/>
</svg>
<div class="t" style="left:83px;top:747px;">Fitswork</div>
<div class="a" style="left:222px;top:742px;width:160px;height:22px;background:repeating-conic-gradient(#fff 0 25%,#d4d0c8 0 50%) 0 0/2px 2px;box-shadow:inset 1px 1px #404040,inset -1px -1px #fff,inset 2px 2px #808080"></div>
<svg class="a" style="left:225px;top:744px" width="16" height="18" shape-rendering="crispEdges">
<rect x="2" y="1" width="7" height="4" fill="#000"/><rect x="3" y="1" width="5" height="3" fill="#80ff80"/>
<rect x="5" y="5" width="1" height="2" fill="#000"/>
<path d="M5.5 6L8.5 9L5.5 12L2.5 9z" fill="#ffff90" stroke="#000" stroke-width="1" shape-rendering="auto"/>
<rect x="5" y="12" width="1" height="1" fill="#000"/>
<rect x="2" y="13" width="7" height="4" fill="#000"/><rect x="3" y="14" width="5" height="2" fill="#a0a000"/>
<rect x="9" y="6" width="6" height="4" fill="#000"/><rect x="10" y="7" width="5" height="3" fill="#ff00ff"/>
<rect x="8" y="8" width="1" height="1" fill="#000"/>
<rect x="12" y="10" width="1" height="1" fill="#000"/>
<rect x="10" y="11" width="4" height="3" fill="#000"/><rect x="11" y="12" width="3" height="2" fill="#ff0000"/>
<rect x="10" y="15" width="4" height="2" fill="#000"/><rect x="11" y="15" width="3" height="2" fill="#006858"/>
</svg>
<div class="t" style="left:247px;top:748px;font-weight:bold;letter-spacing:0.3px">Fitswork</div>
<div class="a" style="left:385px;top:742px;width:160px;height:22px;background:#d4d0c8;box-shadow:inset -1px -1px #404040,inset 1px 1px #fff,inset -2px -2px #808080;"></div>
<svg class="a" style="left:389px;top:745px" width="17" height="16">
<path d="M.5 12.5V2l1.5-1.5h4l1.5 1.5h5v2" fill="#fff0a0" stroke="#c08820"/>
<path d="M.5 12.5h11l3-8H3.5z" fill="#ffd860" stroke="#c08820"/>
<circle cx="6" cy="6" r="3.2" fill="#a8e0ff"/><circle cx="5.5" cy="5.5" r="1.5" fill="#e8f8ff"/>
<path d="M11 13l2 2" stroke="#404040" opacity=".5"/>
</svg>
<div class="t" style="left:409px;top:747px;">flat</div>
<div class="a" style="left:548px;top:742px;width:160px;height:22px;background:#d4d0c8;box-shadow:inset -1px -1px #404040,inset 1px 1px #fff,inset -2px -2px #808080;"></div>
<svg class="a" style="left:552px;top:745px" width="17" height="17">
<path d="M2 5q2 5 10 8l3-2q-5-5-12-7z" fill="#ff9030"/>
<path d="M1 1l12 8" stroke="#0000a0" stroke-width="2"/>
<path d="M4 1l4 2" stroke="#ff4000" stroke-width="2"/><path d="M8 3l3 2" stroke="#ffe000" stroke-width="2"/><path d="M10 4l3 3" stroke="#20a020" stroke-width="2"/>
<path d="M13 7l3 2" stroke="#0000c0" stroke-width="2"/>
<path d="M13 12.5q-2 0-2 2t2 1.5q1-1 0-2h-1.5M12.5 12q0-1 1-1" stroke="#000" fill="none"/>
</svg>
<div class="t" style="left:572px;top:747px;">Paint Shop Pro</div>
<div class="a" style="left:1005px;top:746px;width:13px;height:16px;background:#0a246a"></div>
<div class="t" style="left:1005px;top:748px;color:#fff;font-size:10px;letter-spacing:-0.8px">DE</div>
<div class="a" style="left:1021px;top:742px;width:258px;height:24px;background:#d4d0c8;box-shadow:inset 1px 1px #808080,inset -1px -1px #fff;"></div>
<svg class="a" style="left:1025px;top:751px" width="11" height="8"><path d="M4.5 1L1.5 4L4.5 7M9 1L6 4L9 7" stroke="#000" stroke-width="1.8" fill="none"/></svg>

<svg class="a" style="left:1039px;top:746px" width="16" height="17">
<rect x="0.5" y="2.5" width="8" height="7" fill="#303868" stroke="#90b0e0"/><path d="M9.5 1q2 4 0 8M12.5 0q2 5 0 10" stroke="#808080" fill="none"/>
<ellipse cx="4" cy="12" rx="3.5" ry="2" fill="#e8f0ff" stroke="#2040a0"/><path d="M8 10l6 6M14 10l-6 6" stroke="#ff1010" stroke-width="2"/></svg>
<svg class="a" style="left:1057px;top:746px" width="17" height="17">
<rect x="5.5" y="0.5" width="8" height="7" fill="#303868" stroke="#90b0e0"/><rect x="0.5" y="4.5" width="8" height="7" fill="#303868" stroke="#90b0e0"/>
<ellipse cx="4" cy="13.5" rx="3.5" ry="2" fill="#e8f0ff" stroke="#8090e0"/><path d="M8 8l7 8M15 8l-7 8" stroke="#ff2020" stroke-width="2"/></svg>
<svg class="a" style="left:1075px;top:746px" width="17" height="17">
<rect x="0.5" y="0.5" width="9" height="16" rx="1.5" fill="#fff" stroke="#000"/><rect x="2" y="3" width="6" height="10" fill="#ff9020"/><circle cx="5" cy="5.5" r="1.3" fill="#000"/>
<path d="M9 12q-1-4 2-6q2-4 5-1q1 4-3 5" stroke="#e01010" fill="none" stroke-width="1.5"/><rect x="11" y="5" width="3" height="3" fill="#fff" stroke="#000" stroke-width="0.6"/></svg>
<svg class="a" style="left:1093px;top:746px" width="17" height="17">
<circle cx="11" cy="5" r="5" fill="#40a0e0"/><path d="M7 2q4-3 8 0" stroke="#30c080" stroke-width="2" fill="none"/>
<rect x="1.5" y="3.5" width="9" height="8" fill="#000080" stroke="#606080"/><rect x="0" y="11" width="10" height="2" fill="#a0a0b0"/><rect x="0" y="14" width="7" height="2" fill="#f0c000"/>
<rect x="9" y="10" width="7" height="7" fill="#fff"/><path d="M10 11l5 5M15 11l-5 5" stroke="#e00000" stroke-width="1.6"/></svg>
<svg class="a" style="left:1111px;top:746px" width="17" height="17">
<circle cx="8.5" cy="8.5" r="7" fill="#c8d0e0" stroke="#ff1010" stroke-width="1.8"/><path d="M6 4l3 3M5 10q3 3 6 0" stroke="#fff" stroke-width="1.2" fill="none"/><path d="M3.5 13.5L13.5 3.5" stroke="#d01010" stroke-width="1.8"/></svg>
<svg class="a" style="left:1129px;top:746px" width="17" height="17">
<rect width="17" height="17" fill="#e00010"/><path d="M3 13Q3 3 10 3Q14 4 15 9L9 6L6 13z" fill="none" stroke="#fff" stroke-width="1.5"/><path d="M15 9q0 4-2 4" stroke="#fff" stroke-width="1.2" fill="none"/></svg>
<svg class="a" style="left:1147px;top:746px" width="17" height="16">
<rect x="0.5" y="0.5" width="15" height="10" fill="#c0c0c0" stroke="#000090"/><rect x="2" y="2" width="12" height="7" fill="#c8c8c8"/><rect x="0.5" y="11.5" width="15" height="3" fill="#fff" stroke="#000090"/><path d="M8 11v4" stroke="#808080"/></svg>
<svg class="a" style="left:1165px;top:746px" width="17" height="17">
<rect x="0.5" y="0.5" width="15" height="15" fill="#a8c8e0" stroke="#000090" stroke-width="1.2"/><rect x="1.5" y="12" width="13" height="2.5" fill="#e8f0f8"/><path d="M10 4v7h5v-4h-3" fill="#f0a840" stroke="#704010" stroke-width="0.8"/></svg>
<svg class="a" style="left:1183px;top:746px" width="17" height="17">
<circle cx="7" cy="6.5" r="5.5" fill="#909090"/><circle cx="6" cy="6" r="3" fill="#505058"/><circle cx="5" cy="5" r="1.2" fill="#e0e0e0"/><circle cx="2" cy="4" r="1.5" fill="#6070c0"/>
<path d="M11 14q3-2 4-5M9 15q4-1 6-6" stroke="#8090ff" fill="none"/></svg>
<svg class="a" style="left:1201px;top:748px" width="17" height="12">
<path d="M1 10L5 1h11l-1 9z" fill="#e01020"/><text x="3" y="9" font-family="Liberation Sans" font-weight="bold" font-style="italic" font-size="9" fill="#fff">ATI</text></svg>
<svg class="a" style="left:1219px;top:746px" width="15" height="17">
<circle cx="10" cy="4" r="3" fill="none" stroke="#909090" stroke-width="1.5"/><circle cx="4" cy="9" r="3.5" fill="none" stroke="#909090" stroke-width="1.5"/><circle cx="11" cy="14" r="2" fill="none" stroke="#808080"/>
<circle cx="7" cy="8" r="4" fill="#fff" stroke="#ff1010" stroke-width="1.6"/><path d="M5 10l4-4" stroke="#ff1010" stroke-width="1.4"/></svg>

<div class="t" style="left:1242px;top:748px;">09:35</div>
</body></html>
